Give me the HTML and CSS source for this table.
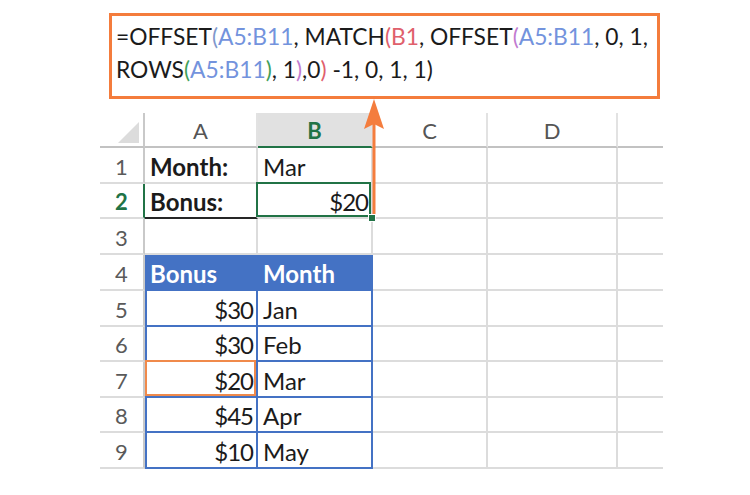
FILE: index.html
```html
<!DOCTYPE html>
<html>
<head>
<meta charset="utf-8">
<link rel="stylesheet" href="styles.css">
</head>
<body>
<div class="page">
  <div class="formula"><span>=OFFSET</span><span class="p-blue">(</span><span class="r-blue">A5:B11</span>, MATCH<span class="p-red">(</span><span class="r-red">B1</span>, OFFSET<span class="p-purple">(</span><span class="r-blue">A5:B11</span>, 0, 1,<br>ROWS<span class="p-green">(</span><span class="r-blue">A5:B11</span><span class="p-green">)</span>, 1<span class="p-purple">)</span>,0<span class="p-red">)</span> -1, 0, 1, 1)</div>

  <div class="sheet">
    <!-- header row -->
    <div class="c rh corner"><span class="tri"></span></div>
    <div class="c ch">A</div>
    <div class="c ch sel-col">B</div>
    <div class="c ch">C</div>
    <div class="c ch">D</div>
    <div class="c ch last"></div>

    <!-- row 1 -->
    <div class="c rh">1</div>
    <div class="c bold">Month:</div>
    <div class="c">Mar</div>
    <div class="c"></div><div class="c"></div><div class="c last"></div>

    <!-- row 2 -->
    <div class="c rh sel-row">2</div>
    <div class="c bold under">Bonus:</div>
    <div class="c right active">$20<span class="handle"></span></div>
    <div class="c"></div><div class="c"></div><div class="c last"></div>

    <!-- row 3 -->
    <div class="c rh">3</div>
    <div class="c"></div><div class="c"></div><div class="c"></div><div class="c"></div><div class="c last"></div>

    <!-- row 4 -->
    <div class="c rh">4</div>
    <div class="c th tl">Bonus</div>
    <div class="c th">Month</div>
    <div class="c"></div><div class="c"></div><div class="c last"></div>

    <!-- row 5 -->
    <div class="c rh">5</div>
    <div class="c td tl right">$30</div>
    <div class="c td">Jan</div>
    <div class="c"></div><div class="c"></div><div class="c last"></div>

    <!-- row 6 -->
    <div class="c rh">6</div>
    <div class="c td tl right">$30</div>
    <div class="c td">Feb</div>
    <div class="c"></div><div class="c"></div><div class="c last"></div>

    <!-- row 7 -->
    <div class="c rh">7</div>
    <div class="c td tl right found">$20</div>
    <div class="c td">Mar</div>
    <div class="c"></div><div class="c"></div><div class="c last"></div>

    <!-- row 8 -->
    <div class="c rh">8</div>
    <div class="c td tl right">$45</div>
    <div class="c td">Apr</div>
    <div class="c"></div><div class="c"></div><div class="c last"></div>

    <!-- row 9 -->
    <div class="c rh">9</div>
    <div class="c td tl right">$10</div>
    <div class="c td">May</div>
    <div class="c"></div><div class="c"></div><div class="c last"></div>
  </div>
</div>

<svg class="arrow" width="24" height="124" viewBox="0 0 24 124">
  <line x1="12" y1="20" x2="12" y2="119" stroke="#f47d3e" stroke-width="3"/>
  <path d="M12 1 L22 31 L12 26 L2 31 Z" fill="#f47d3e"/>
</svg>
</body>
</html>
```
FILE: styles.css
```css
html, body {
  margin: 0;
  padding: 0;
  background: #ffffff;
}

body {
  font-family: Lato, "Open Sans", sans-serif;
  color: #1b1b1b;
  position: relative;
  width: 750px;
  height: 495px;
  overflow: hidden;
}

.page {
  display: flex;
  flex-direction: column;
  align-items: flex-start;
  padding: 13px 0 0 100px;
}

.formula {
  box-sizing: border-box;
  width: 551px;
  height: 86px;
  margin-left: 9px;
  border: 3px solid #f47c3c;
  padding: 4px 0 10px 4px;
  font-size: 22.8px;
  line-height: 33px;
  white-space: nowrap;
  color: #1b1b1b;
}

.r-blue { color: #7393dd; }
.r-red { color: #e0606c; }
.p-blue { color: #7f98cc; }
.p-red { color: #e0606c; }
.p-purple { color: #c27bd0; }
.p-green { color: #3fa05a; }

.sheet {
  margin-top: 14px;
  display: grid;
  grid-template-columns: 45px 113px 115px 115px 130px 45px;
  grid-template-rows: 35px 36px 35px 36px 36px 36px 35px 36px 35px 36px;
}

.c {
  box-sizing: border-box;
  border-right: 2px solid #dcdcdc;
  border-bottom: 2px solid #dcdcdc;
  display: flex;
  align-items: center;
  padding: 2px 2px 0 5px;
  font-size: 24px;
  position: relative;
  white-space: nowrap;
}

.c.last {
  border-right: none;
}

.rh {
  justify-content: center;
  padding: 2px 0 0 0;
  color: #5a5a5a;
  font-size: 22px;
  border-right-color: #c9c9c9;
}

.corner {
  border-bottom-color: #c2c2c2;
}

.tri {
  position: absolute;
  left: 18px;
  top: 9px;
  width: 0;
  height: 0;
  border-style: solid;
  border-width: 0 0 21px 21px;
  border-color: transparent transparent #dcdcdc transparent;
}

.ch {
  justify-content: center;
  padding: 2px 0 0 0;
  color: #555555;
  font-size: 22px;
  border-bottom-color: #c2c2c2;
  border-right-color: #e2e2e2;
}

.sel-col {
  background: #e1e1e1;
  color: #217346;
  font-weight: bold;
  border-bottom: 2px solid #217346;
}

.sel-row {
  color: #217346;
  font-weight: bold;
  border-right: 2px solid #217346;
}

.bold {
  font-weight: bold;
}

.under {
  border-bottom: 2px solid #262626;
}

.right {
  justify-content: flex-end;
  letter-spacing: -1px;
  padding-right: 3px;
}

.active::after {
  content: "";
  position: absolute;
  left: -2px;
  top: -2px;
  right: 0;
  bottom: 0;
  border: 2px solid #217346;
}

.handle {
  position: absolute;
  right: -5px;
  bottom: -5px;
  width: 6px;
  height: 6px;
  background: #217346;
  border: 1px solid #ffffff;
  z-index: 3;
}

.th {
  background: #4472c4;
  color: #ffffff;
  font-weight: bold;
  border-right-color: #4472c4;
  border-bottom-color: #4472c4;
}

.td {
  border-right-color: #4472c4;
  border-bottom-color: #4472c4;
}

.tl {
  box-shadow: inset 2px 0 0 #4472c4;
}

.found::after {
  content: "";
  position: absolute;
  left: 0;
  top: -2px;
  right: 0;
  bottom: 0;
  border: 2px solid #f08a4b;
}

.arrow {
  position: absolute;
  left: 362px;
  top: 98px;
  z-index: 1;
}
```
